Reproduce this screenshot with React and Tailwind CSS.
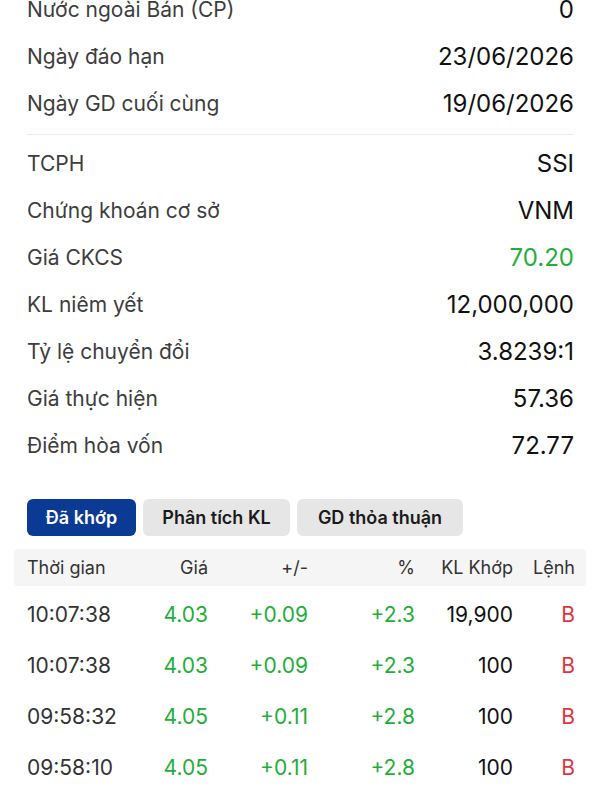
import React from "react";

const info1 = [
  ["Nước ngoài Bán (CP)", "0"],
  ["Ngày đáo hạn", "23/06/2026"],
  ["Ngày GD cuối cùng", "19/06/2026"],
];
const info2 = [
  ["TCPH", "SSI"],
  ["Chứng khoán cơ sở", "VNM"],
  ["Giá CKCS", "70.20", true],
  ["KL niêm yết", "12,000,000"],
  ["Tỷ lệ chuyển đổi", "3.8239:1"],
  ["Giá thực hiện", "57.36"],
  ["Điểm hòa vốn", "72.77"],
];
const trades = [
  ["10:07:38", "4.03", "+0.09", "+2.3", "19,900"],
  ["10:07:38", "4.03", "+0.09", "+2.3", "100"],
  ["09:58:32", "4.05", "+0.11", "+2.8", "100"],
  ["09:58:10", "4.05", "+0.11", "+2.8", "100"],
];

function Row({ label, value, green }) {
  return (
    <div className="flex h-[47px] items-center justify-between">
      <span className="text-[21px] text-[#3d3d3d]">{label}</span>
      <span className={"text-[24px] " + (green ? "text-[#1fae3a]" : "text-[#111]")}>{value}</span>
    </div>
  );
}

const grid = "grid grid-cols-[113px_68px_100px_107px_98px_62px] items-center pl-[13px]";

export default function App() {
  return (
    <div className="w-[600px] h-[800px] overflow-hidden bg-white" style={{ fontFamily: "Inter, 'Noto Sans', sans-serif" }}>
      <div className="pl-[27px] pr-[26px] -mt-[14px]">
        {info1.map(([l, v]) => (
          <Row key={l} label={l} value={v} />
        ))}
        <div className="mt-[7px] mb-[5px] h-px bg-[#ececec]" />
        {info2.map(([l, v, g]) => (
          <Row key={l} label={l} value={v} green={g} />
        ))}
      </div>
      <div className="mt-[30px] flex gap-[7px] pl-[27px]">
        <div className="flex h-[37px] w-[109px] items-center justify-center rounded-md bg-[#0b3a94] text-[18px] font-semibold text-white">Đã khớp</div>
        <div className="flex h-[37px] w-[147px] items-center justify-center rounded-md bg-[#e6e6e6] text-[18px] font-semibold text-[#1a1a1a]">Phân tích KL</div>
        <div className="flex h-[37px] w-[166px] items-center justify-center rounded-md bg-[#e6e6e6] text-[18px] font-semibold text-[#1a1a1a]">GD thỏa thuận</div>
      </div>
      <div className="mx-[14px] mt-[13px]">
        <div className={grid + " h-[37px] rounded-sm bg-[#f5f5f5] text-[18px] text-[#333]"}>
          <span>Thời gian</span>
          <span className="text-right">Giá</span>
          <span className="text-right">+/-</span>
          <span className="text-right">%</span>
          <span className="text-right">KL Khớp</span>
          <span className="text-right">Lệnh</span>
        </div>
        <div className="mt-[3px]">
          {trades.map((t, i) => (
            <div key={i} className={grid + " h-[51px] text-[21px]"}>
              <span className="text-[#333]">{t[0]}</span>
              <span className="text-right text-[#1fae3a]">{t[1]}</span>
              <span className="text-right text-[#1fae3a]">{t[2]}</span>
              <span className="text-right text-[#1fae3a]">{t[3]}</span>
              <span className="text-right text-[#111]">{t[4]}</span>
              <span className="text-right text-[#e0343a]">B</span>
            </div>
          ))}
        </div>
      </div>
    </div>
  );
}
